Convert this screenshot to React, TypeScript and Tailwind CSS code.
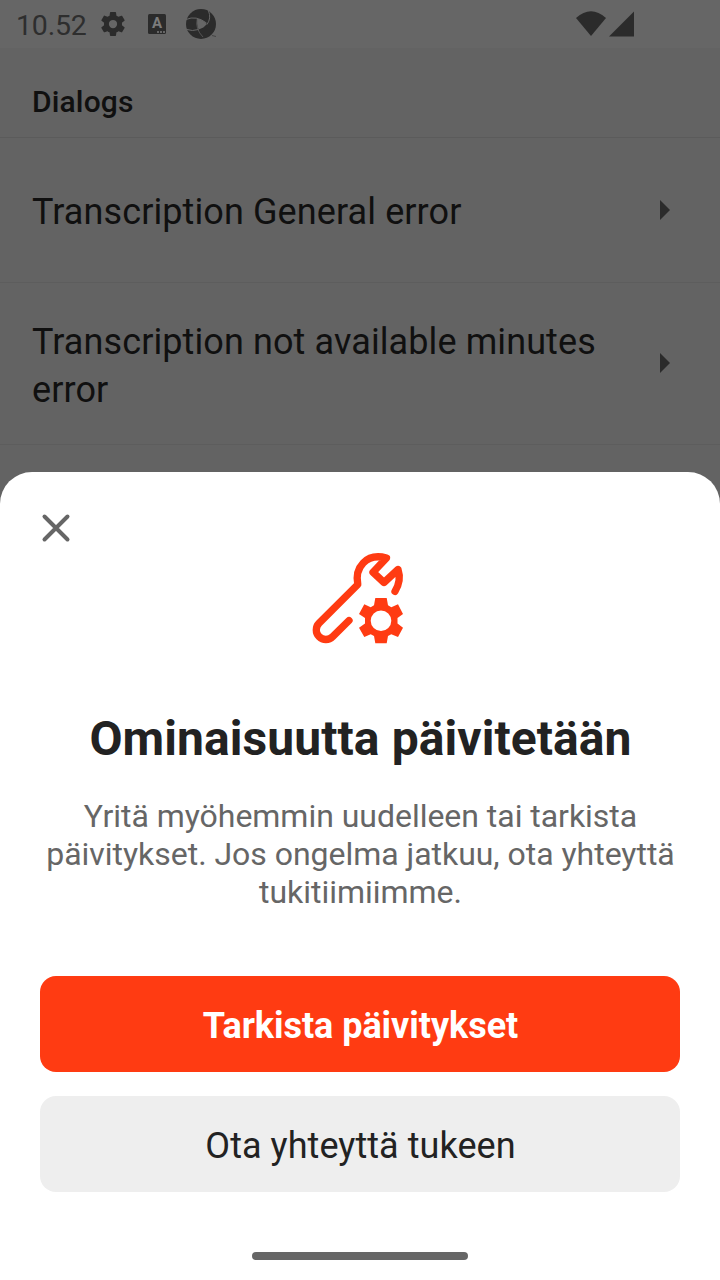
import React from "react";

function SettingsIcon() {
  return (
    <svg className="h-[30px] w-[30px]" viewBox="0 0 24 24" fill="#2b2b2b">
      <path d="M19.14 12.94c.04-.3.06-.61.06-.94 0-.32-.02-.64-.07-.94l2.03-1.58c.18-.14.23-.41.12-.61l-1.92-3.32c-.12-.22-.37-.29-.59-.22l-2.39.96c-.5-.38-1.03-.7-1.62-.94l-.36-2.54c-.04-.24-.24-.41-.48-.41h-3.84c-.24 0-.43.17-.47.41l-.36 2.54c-.59.24-1.13.57-1.62.94l-2.39-.96c-.22-.08-.47 0-.59.22L2.74 8.87c-.12.21-.08.47.12.61l2.03 1.58c-.05.3-.09.63-.09.94s.02.64.07.94l-2.03 1.58c-.18.14-.23.41-.12.61l1.92 3.32c.12.22.37.29.59.22l2.39-.96c.5.38 1.03.7 1.62.94l.36 2.54c.05.24.24.41.48.41h3.84c.24 0 .44-.17.47-.41l.36-2.54c.59-.24 1.13-.56 1.62-.94l2.39.96c.22.08.47 0 .59-.22l1.92-3.32c.12-.22.07-.47-.12-.61l-2.01-1.58z" />
      <circle cx="12" cy="12" r="3.300" fill="#666666" />
    </svg>
  );
}

function KeyboardBadge() {
  return (
    <div className="ml-[20px] flex h-5 w-[18px] flex-col items-center rounded-[1.5px] bg-[#2b2b2b] pt-[2px] text-[#7c7c7c]">
      <span className="text-[15px] font-bold leading-[14px]">A</span>
      <span className="mr-[1px] mt-[1px] flex gap-[1px] self-end">
        <i className="h-[2px] w-[2px] bg-[#666666]" />
        <i className="h-[2px] w-[2px] bg-[#666666]" />
        <i className="h-[2px] w-[2px] bg-[#666666]" />
      </span>
    </div>
  );
}

function ApertureIcon() {
  return (
    <svg className="h-[30px] w-[30px]" viewBox="0 0 30 30">
      <circle cx="15" cy="15" r="15" fill="#2b2b2b" />
      <path d="M11.200 9.800Q17 10.500 20.800 15Q18 19 12.500 20.500Q10.500 15 11.200 9.800Z" fill="#666666" />
      <g fill="none" stroke="#666666" strokeWidth="1">
        <path d="M0 10.500Q10 6 20.500 14" />
        <path d="M22.500 2Q25.500 9 21 15.500" />
        <path d="M12.500 20.500Q6 22.500 1 20.500" />
        <path d="M11.200 10Q9 20 17 28" strokeWidth="0.700" />
      </g>
      <path d="M26 26.500L30 27.500" stroke="#444444" strokeWidth="1" />
    </svg>
  );
}

function StatusBar() {
  return (
    <header className="flex h-12 items-center bg-[#666666] pl-4">
      <span className="w-[82px] pt-[3px] text-[28.500px] leading-[46px] tracking-[-0.200px] text-[#2e2e2e]">10.52</span>
      <SettingsIcon />
      <KeyboardBadge />
      <div className="ml-[20px]">
        <ApertureIcon />
      </div>
      <svg className="ml-[360px] h-[26px] w-[58px]" viewBox="0 0 58 26" fill="#2b2b2b">
        <path d="M0 7Q15 -6.500 30 7L15 25Z" />
        <path d="M33 25.500L58 0.500V25.500Z" />
      </svg>
    </header>
  );
}

function Row({ label, className }: { label: string; className: string }) {
  return (
    <div className={`flex items-center border-b border-[#5d5d5d] pl-8 pr-[50px] ${className}`}>
      <span className="w-[600px] text-[36px] leading-[48px] tracking-[0.100px]">{label}</span>
      <svg className="ml-auto h-5 w-2.5" viewBox="0 0 10 20" fill="#2b2b2b">
        <path d="M0 0L10 10L0 20Z" />
      </svg>
    </div>
  );
}

function WrenchGearIcon() {
  return (
    <svg className="h-[120px] w-[120px]" viewBox="0 0 120 120">
      <path
        d="M49 80.500L32.700 96.700A9.600 9.600 0 0 1 19.100 83.100L57.800 44.500C54.500 28 66 12.500 86.500 18L73 32.300L84 42.500L98 29.500C100.500 37 99.500 44 95 51.300"
        fill="none"
        stroke="#ff3b12"
        strokeWidth="7.300"
        strokeLinecap="round"
        strokeLinejoin="round"
      />
      <path
        fill="#ff3b12"
        fillRule="evenodd"
        d="M75.300 58H86.700L88 65.300L91.300 67.300L98 64.300L103 74L97.500 78V83.500L103 87.700L98 97L91.300 94.300L88 96L86.700 103.200H75.300L74 96L70.700 94.300L64.300 97L59 87.700L65 83.500V78L59 74L64.300 64.300L70.700 67.300L74 65.300ZM81 70.400A10.300 10.300 0 1 0 81 91A10.300 10.300 0 1 0 81 70.400Z"
      />
    </svg>
  );
}

export default function App() {
  return (
    <div className="relative h-[1280px] w-[720px] overflow-hidden bg-[#636363] font-['Roboto',sans-serif] text-[#101010]">
      <StatusBar />
      <h1 className="flex h-[90px] items-center border-b border-[#5b5b5b] pl-8 pt-[18px] text-[30px] font-medium leading-9 tracking-[0.150px]">Dialogs</h1>
      <Row label="Transcription General error" className="h-[145px] [&>span]:pt-1" />
      <Row label="Transcription not available minutes error" className="h-[162px] pb-px [&>span]:pt-1.5" />

      <section className="absolute inset-x-0 bottom-0 top-[472px] flex flex-col items-center rounded-t-[32px] bg-white px-10" role="dialog">
        <button className="mt-10 h-8 w-8 self-start" aria-label="Sulje">
          <svg className="h-8 w-8" viewBox="0 0 32 32" stroke="#666666" strokeWidth="4" strokeLinecap="round">
            <path d="M4.500 4.500L27.500 27.500M27.500 4.500L4.500 27.500" />
          </svg>
        </button>
        <div className="-mt-1">
          <WrenchGearIcon />
        </div>
        <h2 className="mt-[51px] whitespace-nowrap pl-px text-[48px] font-bold leading-[56px] tracking-[0.080px] text-[#222222]">Ominaisuutta päivitetään</h2>
        <p className="mt-[30px] w-[640px] pl-px text-center text-[32px] leading-[38px] tracking-[-0.030px] text-[#666666]">
          Yritä myöhemmin uudelleen tai tarkista päivitykset. Jos ongelma jatkuu, ota yhteyttä tukitiimiimme.
        </p>
        <button className="mt-[65px] h-24 w-full rounded-2xl bg-[#ff3b12] pl-px pt-1 text-[36px] font-bold tracking-[-0.040px] text-white">Tarkista päivitykset</button>
        <button className="mt-6 h-24 w-full rounded-2xl bg-[#eeeeee] pl-px pt-1 text-[36px] tracking-[0.060px] text-[#222222]">Ota yhteyttä tukeen</button>
        <div className="mt-[60px] h-2 w-[216px] rounded-full bg-[#666666]" />
      </section>
    </div>
  );
}
